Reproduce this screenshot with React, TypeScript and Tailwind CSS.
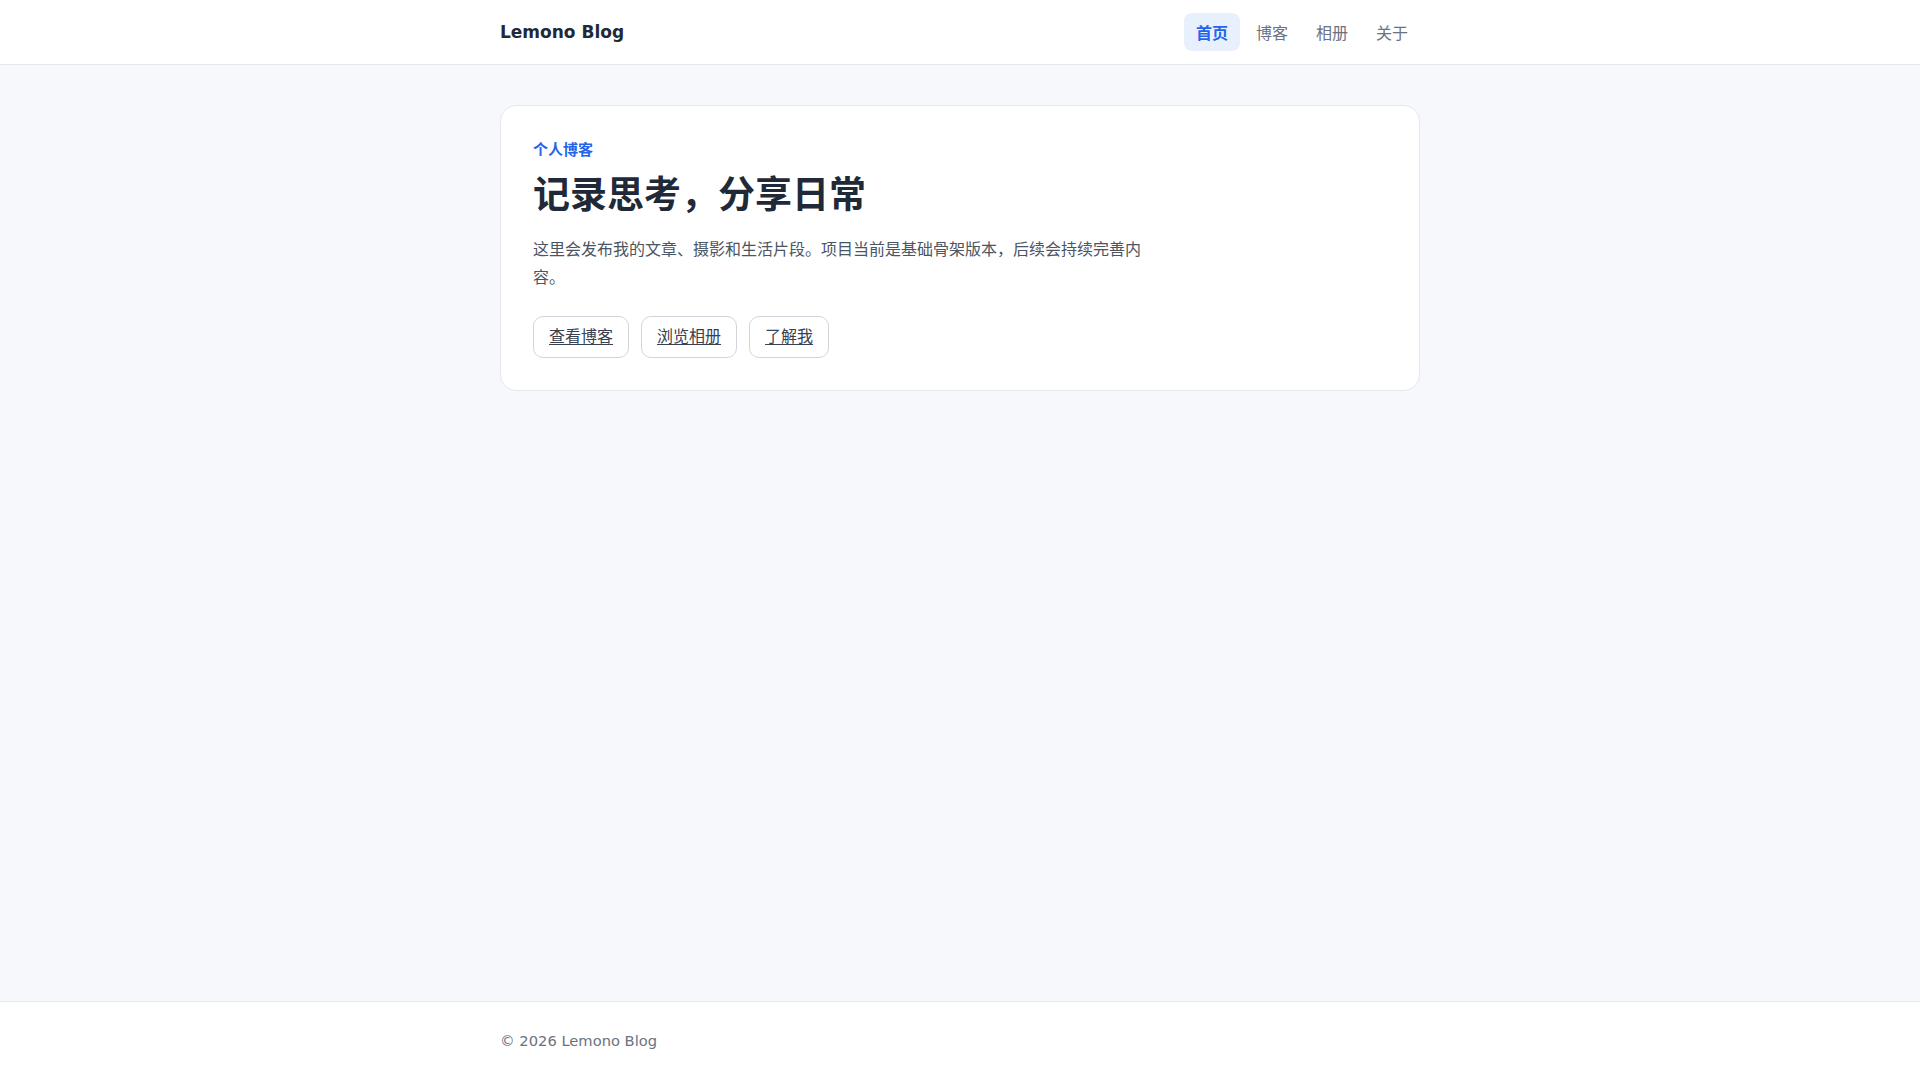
const navItems = [
  { label: "首页", active: true },
  { label: "博客", active: false },
  { label: "相册", active: false },
  { label: "关于", active: false },
]

const actions = ["查看博客", "浏览相册", "了解我"]

export default function App() {
  return (
    <div
      className="flex min-h-screen flex-col bg-[#f7f8fb] text-[#1f2937]"
      style={{ fontFamily: '"DejaVu Sans", "Noto Sans CJK SC", sans-serif' }}
    >
      <header className="h-[65px] border-b border-[#e5e7eb] bg-white">
        <div className="mx-auto flex h-full max-w-[920px] items-center justify-between">
          <a className="pt-0.5 text-[17px] font-bold text-[#1f2937]" href="#">
            Lemono Blog
          </a>
          <nav className="flex items-center gap-1">
            {navItems.map((item) => (
              <a
                key={item.label}
                href="#"
                className={
                  item.active
                    ? "rounded-lg bg-[#e8f0fe] px-3 pt-[9px] pb-[5px] text-base font-bold leading-6 text-[#2563eb]"
                    : "rounded-lg px-3 pt-[9px] pb-[5px] text-base leading-6 text-[#6b7280]"
                }
              >
                {item.label}
              </a>
            ))}
          </nav>
        </div>
      </header>

      <main className="mx-auto w-full max-w-[920px] flex-1 pt-10">
        <section className="rounded-2xl border border-[#e5e7eb] bg-white px-8 pt-[34px] pb-8">
          <p className="text-[15px] font-bold leading-5 text-[#2563eb]">个人博客</p>
          <h1 className="mt-4 text-[37px] font-bold leading-10 text-[#1f2937]">记录思考，分享日常</h1>
          <p className="mt-5 max-w-[615px] text-base leading-7 text-[#4b5563]">
            这里会发布我的文章、摄影和生活片段。项目当前是基础骨架版本，后续会持续完善内容。
          </p>
          <div className="mt-6 flex gap-3">
            {actions.map((label) => (
              <a
                key={label}
                href="#"
                className="rounded-[10px] border border-[#d1d5db] bg-white px-[15px] py-2 text-base leading-6 text-[#374151] underline underline-offset-2"
              >
                {label}
              </a>
            ))}
          </div>
        </section>
      </main>

      <footer className="border-t border-[#e5e7eb] bg-white">
        <div className="mx-auto max-w-[920px] py-[29px] text-[14.7px] leading-5 text-[#6b7280]">© 2026 Lemono Blog</div>
      </footer>
    </div>
  )
}
